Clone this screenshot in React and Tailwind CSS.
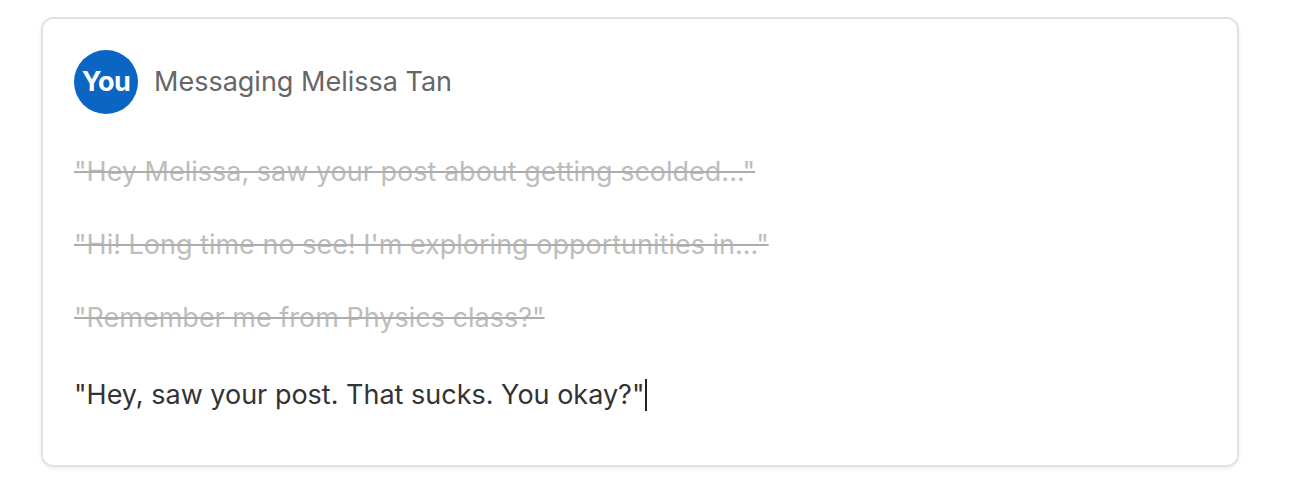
import React from "react";

const drafts = [
  "\"Hey Melissa, saw your post about getting scolded...\"",
  "\"Hi! Long time no see! I'm exploring opportunities in...\"",
  "\"Remember me from Physics class?\"",
];

const App = () => {
  return (
    <div
      className="w-[1290px] h-[495px] bg-white pt-[17px] pl-[41px]"
      style={{ fontFamily: "Inter, 'Liberation Sans', sans-serif" }}
    >
      <div className="w-[1198px] h-[450px] rounded-[12px] border-2 border-[#e2e2e2] shadow-[0_2px_4px_rgba(0,0,0,0.06)] pl-[31px] pt-[31px]">
        <div className="flex items-center gap-[16px]">
          <div className="w-[64px] h-[64px] rounded-full bg-[#0a66c2] flex items-center justify-center text-white font-bold text-[27px] tracking-[-0.5px]">
            You
          </div>
          <span className="text-[27px] text-[#666666]">Messaging Melissa Tan</span>
        </div>

        <div className="mt-[40px] flex flex-col gap-[37px]">
          {drafts.map((d) => (
            <p
              key={d}
              className="text-[27px] leading-[36px] text-[#bdbdbd] line-through decoration-[#adadad] decoration-2"
            >
              {d}
            </p>
          ))}
          <p className="mt-[4px] text-[27px] leading-[36px] text-[#333333] flex items-center">
            "Hey, saw your post. That sucks. You okay?"
            <span className="inline-block w-[2px] h-[32px] bg-[#222] ml-[1px]" />
          </p>
        </div>
      </div>
    </div>
  );
};

export default App;
